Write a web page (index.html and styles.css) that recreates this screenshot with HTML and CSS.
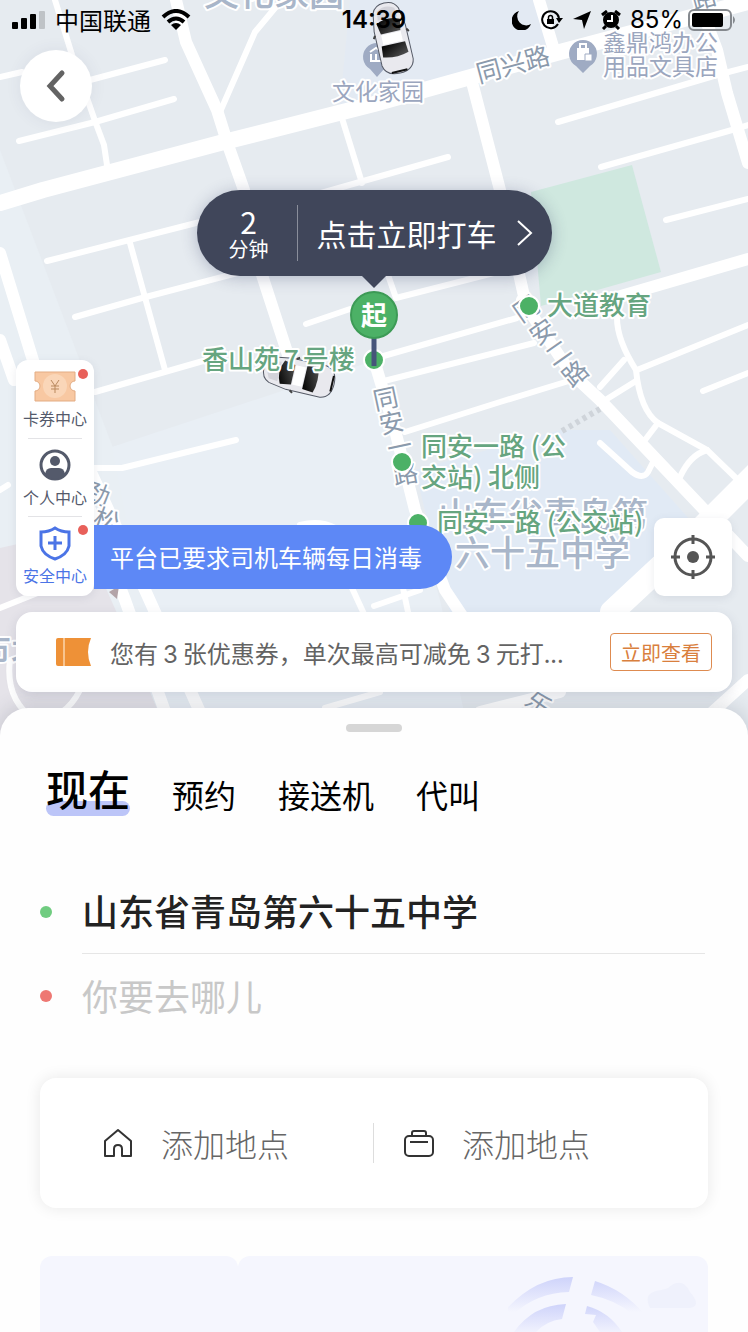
FILE: index.html
```html
<!DOCTYPE html>
<html lang="zh-CN">
<head>
    <meta charset="UTF-8">
    <meta name="viewport" content="width=device-width, initial-scale=1.0">
    <title>打车</title>
    <link rel="stylesheet" href="styles.css">
</head>
<body>
    <section class="map">
        <svg class="map-canvas" viewBox="0 0 748 740" preserveAspectRatio="xMidYMin slice">
            <defs>
                <linearGradient id="glass" x1="0" y1="0" x2="1" y2="1">
                    <stop offset="0" stop-color="#000"/>
                    <stop offset="1" stop-color="#555"/>
                </linearGradient>
                <g id="car">
                    <path d="M-13 -28Q-10 -36 0 -36Q10 -36 13 -28L16 -10V25Q14 36 0 36Q-14 36 -16 25V-10Z" fill="#e9e9ee" stroke="#555a66"/>
                    <path d="M-9 -29Q0 -35 9 -29L10 -20H-10Z" fill="#d3d3da"/>
                    <path d="M-12 -17Q0 -23 12 -17L10 -6H-10Z" fill="url(#glass)"/>
                    <path d="M-10 -5H10V5H-10Z" fill="#fff"/>
                    <path d="M-12 6H12L13 17Q0 21 -13 17Z" fill="url(#glass)"/>
                    <path d="M-8 34H8" stroke="#111" stroke-width="2"/>
                    <path d="M-16 -6L-18 -3M16 -6L18 -3" stroke="#444" stroke-width="2"/>
                </g>
            </defs>
            <rect width="748" height="740" fill="#e6ebf0"/>
            <!-- 地块 -->
            <path d="M350 0H535L552 48L374 97L340 106Z" fill="#e3eaf3"/>
            <path d="M0 150L110 440L190 640V740H0Z" fill="#e9eff4"/>
            <path d="M112 447L370 362L440 600L470 740H170Z" fill="#e9eff5"/>
            <path d="M415 470L560 430L610 430L690 520L600 612H450Z" fill="#e1eaf5"/>
            <path d="M0 548L80 530L120 620L170 740H0Z" fill="#e5e3e9"/>
            <path d="M531 192L632 165L661 272L541 306Z" fill="#cfe8df"/>
            <!-- 道路 -->
            <g class="road road-sm">
                <path d="M55 0L72 55L95 121L104 145L107 165"/>
                <path d="M0 77L22 72M90 80L165 60M19 141L95 122L174 99"/>
                <path d="M275 8L255 32L220 112"/>
                <path d="M341 115L362 183M300 199L374 178L448 157"/>
                <path d="M558 122L717 75L748 67M601 167L732 130L748 125M666 220L748 199"/>
                <path d="M47 261L200 222M75 317L142 298L260 267M130 243L165 370M95 392L210 359"/>
                <path d="M94 468H122L236 440M0 490L8 485"/>
                <path d="M306 324L350 309M388 275L396 298L510 269"/>
                <path d="M380 357L517 318M380 382L534 343M405 432L500 402L572 380"/>
                <path d="M617 318Q617 340 636 370Q640 410 658 423L707 450L738 480"/>
                <path d="M637 370L748 325M703 391L748 373M600 387L624 360M607 399L636 381"/>
                <path d="M658 423L645 440M707 450Q690 455 680 477M600 443L632 472Q643 480 648 472L654 460"/>
                <path d="M352 588L364 614M374 606L420 590M403 588L408 612"/>
                <path d="M0 608L40 592M10 660Q5 700 35 720M35 720Q65 720 80 690"/>
                <path d="M325 708L380 692M300 525Q320 520 335 528"/>
            </g>
            <g class="road road-md">
                <path d="M176 0L186 42L217 110L228 145L244 190L262 275L288 355"/>
                <path d="M472 82L500 190L524 296M539 0L554 50"/>
                <path d="M700 5L717 50L727 93L748 163"/>
                <path d="M590 305L748 259"/>
                <path d="M0 253L36 370L125 600L168 720M0 340L14 380M90 470L145 590L200 712"/>
                <path d="M374 360L395 430L415 510L445 590L465 620"/>
                <path d="M522 300L570 372L600 400L748 556M748 680L706 718M480 712L560 692"/>
            </g>
            <path class="road road-lg" d="M0 203L43 190L220 143L374 104L560 52L748 2"/>
            <path class="road road-xl" d="M760 470L700 530L612 612"/>
            <path d="M562 431L600 409" stroke="#cfd4da" stroke-width="6" stroke-dasharray="4 4"/>
            <!-- 地名 -->
            <g class="label label-area">
                <text x="204" y="6">文化家园</text>
                <text x="438" y="528">山东省青岛第</text>
                <text x="455" y="566">六十五中学</text>
                <text x="-24" y="663">市北</text>
            </g>
            <g class="label label-road">
                <text transform="translate(479 83) rotate(-15)">同兴路</text>
                <text transform="translate(694 10) rotate(-15)">路</text>
                <text transform="translate(385 399) rotate(-12)" x="-12" y="9">同</text>
                <text transform="translate(391 423) rotate(-12)" x="-12" y="9">安</text>
                <text transform="translate(399 447) rotate(-12)" x="-12" y="9">一</text>
                <text transform="translate(405 474) rotate(-10)" x="-12" y="9">路</text>
                <text transform="translate(526 309) rotate(-35)" x="-12" y="9">同</text>
                <text transform="translate(542 332) rotate(-35)" x="-12" y="9">安</text>
                <text transform="translate(558 353) rotate(-35)" x="-12" y="9">二</text>
                <text transform="translate(575 374) rotate(-40)" x="-12" y="9">路</text>
                <text transform="translate(97 494) rotate(20)" x="-12" y="9">劲</text>
                <text transform="translate(106 520) rotate(20)" x="-12" y="9">松</text>
                <text transform="translate(538 704) rotate(35)" x="-12" y="9">乐</text>
            </g>
            <path d="M109 592L119 586L117 599Z" fill="#b3a4a8"/>
            <g fill="#9fabc3">
                <path d="M377 77L370 69A14 14 0 1 1 384 69Z"/>
                <path d="M583 73L576 66A14 14 0 1 1 590 66Z"/>
            </g>
            <path d="M370 52L376 48L382 52M371 54V61H381V54M376 54V61" fill="none" stroke="#fff" stroke-width="2"/>
            <path d="M577 48H589V60H577Z" fill="#fff"/>
            <path d="M580 48V44H586V48" fill="none" stroke="#fff" stroke-width="2"/>
            <path d="M585 54H592V61H585Z" fill="#fff" stroke="#9fabc3"/>
            <g class="label label-shop">
                <text x="332" y="100">文化家园</text>
                <text x="603" y="51">鑫鼎鸿办公</text>
                <text x="603" y="75">用品文具店</text>
            </g>
            <use href="#car" transform="translate(392 38) rotate(-13)"/>
            <use href="#car" transform="translate(299 376) rotate(-77)"/>
            <!-- 推荐上车点 -->
            <g class="stop">
                <circle cx="374" cy="360" r="10"/>
                <circle cx="529" cy="306" r="10"/>
                <circle cx="402" cy="462" r="10"/>
                <circle cx="418" cy="523" r="10"/>
            </g>
            <g class="label label-stop">
                <text x="202" y="369">香山苑<tspan dx="4">7</tspan><tspan dx="4">号楼</tspan></text>
                <text x="547" y="315">大道教育</text>
                <text x="421" y="456">同安一路 (公</text>
                <text x="421" y="487">交站) 北侧</text>
                <text x="437" y="532">同安一路 (公交站)</text>
            </g>
            <path d="M374 338V366" stroke="#46557a" stroke-width="5"/>
            <circle cx="374" cy="315" r="23" fill="#4cb166" stroke="#3d9b56" stroke-width="2"/>
            <text class="pin-text" x="374" y="325">起</text>
        </svg>

        <header class="status-bar">
            <div class="status-left">
                <svg width="33" height="18" viewBox="0 0 33 18">
                    <rect x="0" y="11" width="6" height="7" rx="1"/>
                    <rect x="9" y="7" width="6" height="11" rx="1"/>
                    <rect x="18" y="3" width="6" height="15" rx="1"/>
                    <rect x="27" y="0" width="6" height="18" rx="1" fill="#bfc3c7"/>
                </svg>
                <span>中国联通</span>
                <svg width="30" height="22" viewBox="0 0 30 22" fill="none" stroke="#000" stroke-width="4">
                    <path d="M2 8Q15 -4 28 8"/>
                    <path d="M7 13Q15 6 23 13"/>
                    <path d="M15 21L10 16Q15 12 20 16Z" fill="#000" stroke="none"/>
                </svg>
            </div>
            <time class="status-time">14:39</time>
            <div class="status-right">
                <svg width="20" height="20" viewBox="0 0 20 20"><path d="M7 1A10 10 0 1 0 19 14A9 9 0 0 1 7 1Z"/></svg>
                <svg width="22" height="20" viewBox="0 0 22 20">
                    <path d="M17 14A8.500 8.500 0 1 1 18 8" fill="none" stroke="#000" stroke-width="2"/>
                    <path d="M15 8H22L18 13Z"/>
                    <path d="M6 9H13V14H6Z"/>
                    <path d="M7.500 9V7.500A2 2 0 0 1 11.500 7.500V9" fill="none" stroke="#000" stroke-width="1.500"/>
                </svg>
                <svg width="20" height="20" viewBox="0 0 20 20"><path d="M19 1L12 19L10 10L1 9Z"/></svg>
                <svg width="20" height="20" viewBox="0 0 20 20">
                    <circle cx="10" cy="10" r="8"/>
                    <path d="M1 5L6 1M19 5L14 1M5 16L2 19M15 16L18 19" stroke="#000" stroke-width="3"/>
                    <path d="M11 5V11H6" fill="none" stroke="#fff" stroke-width="2"/>
                </svg>
                <span>85%</span>
                <svg class="battery" width="48" height="22" viewBox="0 0 48 22">
                    <rect x="1" y="1" width="42" height="20" rx="5" fill="none" stroke="#85898e" stroke-width="2"/>
                    <rect x="4" y="4" width="31" height="14" rx="2"/>
                    <path d="M45 7Q49 11 45 15Z" fill="#85898e"/>
                </svg>
            </div>
        </header>

        <button class="back" type="button" aria-label="返回">
            <svg width="24" height="36" viewBox="0 0 24 36"><path d="M18 5L6 18L18 31" fill="none" stroke="#636363" stroke-width="5" stroke-linecap="round"/></svg>
        </button>

        <button class="bubble" type="button">
            <span class="bubble-wait"><b>2</b>分钟</span>
            <span class="bubble-text">点击立即打车</span>
            <svg width="18" height="28" viewBox="0 0 18 28"><path d="M2 2L15 14L2 26" fill="none" stroke="#fff" stroke-width="2"/></svg>
        </button>

        <div class="tools">
            <nav class="side-menu">
                <a class="side-item has-dot" href="#">
                    <svg width="42" height="36" viewBox="0 0 42 36">
                        <path d="M1 4H41V13A5 5 0 0 0 41 23V33H1V23A5 5 0 0 0 1 13Z" fill="#f8c8a2" stroke="#e3ac83"/>
                        <circle cx="21" cy="18" r="12" fill="#fad6b8"/>
                        <path d="M17 12L21 18L25 12M21 18V25M17 18H25M17 21H25" fill="none" stroke="#b9895f" stroke-width="1"/>
                    </svg>
                    卡券中心
                </a>
                <a class="side-item" href="#">
                    <svg width="36" height="36" viewBox="0 0 36 36">
                        <circle cx="18" cy="18" r="14" fill="none" stroke="#545a6b" stroke-width="3"/>
                        <circle cx="18" cy="14" r="5" fill="#545a6b"/>
                        <path d="M8 27Q9 21 14 21H22Q27 21 28 27Q18 36 8 27Z" fill="#545a6b"/>
                    </svg>
                    个人中心
                </a>
                <a class="side-item safe has-dot" href="#">
                    <svg width="36" height="36" viewBox="0 0 36 36" fill="none" stroke="#4b74e6" stroke-width="3">
                        <path d="M18 3Q24 7 32 7V21Q30 30 18 34Q6 30 4 21V7Q12 7 18 3Z"/>
                        <path d="M18 11V25M11 18H25"/>
                    </svg>
                    安全中心
                </a>
            </nav>
            <p class="notice">平台已要求司机车辆每日消毒</p>
            <button class="locate" type="button" aria-label="定位">
                <svg width="46" height="46" viewBox="0 0 46 46" fill="none" stroke="#555" stroke-width="3">
                    <circle cx="23" cy="23" r="18"/>
                    <circle cx="23" cy="23" r="6" fill="#555" stroke="none"/>
                    <path d="M23 1V10M23 36V45M1 23H10M36 23H45"/>
                </svg>
            </button>
        </div>

        <div class="coupon">
            <svg width="36" height="28" viewBox="0 0 36 28">
                <path d="M2 0H35Q29 14 35 28H2Q0 28 0 26V2Q0 0 2 0Z" fill="#ee9137"/>
                <path d="M8 0V28" stroke="#f8c48f" stroke-width="2"/>
            </svg>
            <p>您有<span>3</span>张优惠券，单次最高可减免<span>3</span>元打...</p>
            <button type="button">立即查看</button>
        </div>
    </section>

    <main class="sheet">
        <div class="handle"></div>
        <div class="tabs">
            <button class="tab active" type="button">现在</button>
            <button class="tab" type="button">预约</button>
            <button class="tab" type="button">接送机</button>
            <button class="tab" type="button">代叫</button>
        </div>
        <form class="route">
            <div class="route-row">
                <label class="dot green" for="from" aria-label="起点"></label>
                <input id="from" type="text" value="山东省青岛第六十五中学">
            </div>
            <div class="route-row">
                <label class="dot red" for="to" aria-label="终点"></label>
                <input id="to" type="text" placeholder="你要去哪儿">
            </div>
        </form>
        <div class="places">
            <a href="#">
                <svg width="30" height="30" viewBox="0 0 30 30" fill="none" stroke="#333" stroke-width="2" stroke-linejoin="round">
                    <path d="M2 13L15 2L28 13V28H19V21Q19 17 15 17Q11 17 11 21V28H2Z"/>
                </svg>
                添加地点
            </a>
            <a href="#">
                <svg width="30" height="30" viewBox="0 0 30 30" fill="none" stroke="#333" stroke-width="2">
                    <rect x="1" y="8" width="28" height="20" rx="4"/>
                    <path d="M8 8V5Q8 3 10 3H20Q22 3 22 5V8M6 14H24"/>
                </svg>
                添加地点
            </a>
        </div>
        <div class="promo">
            <div class="promo-side"></div>
            <div class="promo-main">
                <svg width="200" height="76" viewBox="0 0 200 76">
                    <defs>
                        <linearGradient id="fade" gradientUnits="userSpaceOnUse" x1="0" y1="20" x2="0" y2="56">
                            <stop offset="0" stop-color="#cdd2fa"/>
                            <stop offset="1" stop-color="#f5f6fe"/>
                        </linearGradient>
                        <linearGradient id="fade-low" gradientUnits="userSpaceOnUse" x1="0" y1="46" x2="0" y2="80">
                            <stop offset="0" stop-color="#ccd1fa"/>
                            <stop offset="1" stop-color="#f5f6fe"/>
                        </linearGradient>
                    </defs>
                    <path d="M-6 58Q25 21 65 21L61 36Q28 37 6 58Z" fill="url(#fade)"/>
                    <path d="M87 25Q116 34 136 58H124Q108 44 83 39Z" fill="url(#fade)"/>
                    <path d="M6 76Q25 49 58 48L54 63Q38 65 28 76Z" fill="url(#fade-low)"/>
                    <path d="M79 50Q101 56 114 76H92L85 66L88 59L77 58Z" fill="url(#fade-low)"/>
                    <path d="M142 52Q134 36 153 34Q158 33 160 32Q174 20 182 36Q194 50 182 52Z" fill="#eff1fc"/>
                </svg>
            </div>
        </div>
    </main>
</body>
</html>
```

FILE: styles.css
```css
* {
    box-sizing: border-box;
}
body {
    margin: 0;
    background-color: #fff;
    color: #000;
    font-family: "Noto Sans CJK SC", sans-serif;
}
button,
input {
    padding: 0;
    border: 0;
    background: none;
    color: inherit;
    font-family: inherit;
}
button {
    cursor: pointer;
}
a {
    color: inherit;
    text-decoration: none;
}
p {
    margin: 0;
}
svg {
    flex: none;
}

/* 地图 */
.map {
    position: relative;
    padding-bottom: 16px;
}
/* 地图底图铺在所有控件下面，并延伸到面板圆角后面 */
.map-canvas {
    position: absolute;
    top: 0;
    left: 0;
    z-index: -1;
    width: 100%;
    height: calc(100% + 32px);
}
.road {
    fill: none;
    stroke: #fff;
    stroke-linecap: round;
    stroke-linejoin: round;
}
.road-sm {
    stroke-width: 6px;
}
.road-md {
    stroke-width: 12px;
}
.road-lg {
    stroke-width: 16px;
}
.road-xl {
    stroke-width: 24px;
}
.label {
    stroke: #fff;
    stroke-width: 4px;
    stroke-linejoin: round;
    paint-order: stroke;
}
.label-area {
    fill: #a9b6c9;
    font-size: 35px;
    font-weight: 500;
}
.label-road {
    fill: #8b9aac;
    font-size: 25px;
}
.label-shop {
    fill: #9ba6be;
    font-size: 23px;
}
.label-stop {
    fill: #66a580;
    font-size: 26px;
    font-weight: 500;
}
.stop {
    fill: #4cb166;
    stroke: #fff;
    stroke-width: 2px;
}
.pin-text {
    fill: #fff;
    font-size: 26px;
    font-weight: 700;
    text-anchor: middle;
}

/* 状态栏 */
.status-bar {
    display: grid;
    grid-template-columns: 1fr auto 1fr;
    align-items: center;
    height: 40px;
    padding: 0 12px;
    font-size: 24px;
    line-height: 40px;
}
.status-left,
.status-right {
    display: flex;
    align-items: center;
    gap: 10px;
}
.status-right {
    justify-content: flex-end;
    gap: 9px;
    font-family: Inter, sans-serif;
}
.battery {
    margin-left: -4px;
}
.status-time {
    font-family: Inter, sans-serif;
    font-weight: 600;
}

.back {
    display: flex;
    align-items: center;
    justify-content: center;
    width: 72px;
    height: 72px;
    margin: 10px 0 0 20px;
    border-radius: 50%;
    background-color: #fff;
    box-shadow: 0 0 16px rgba(60, 70, 100, .08);
}

/* 上车气泡 */
.bubble {
    position: relative;
    display: flex;
    align-items: center;
    height: 86px;
    margin: 68px auto 0;
    padding: 0 18px 0 32px;
    border-radius: 43px;
    background-color: #40465a;
    color: #fff;
    box-shadow: 0 2px 16px rgba(50, 60, 100, .3);
}
.bubble::after {
    content: "";
    position: absolute;
    top: 100%;
    left: 50%;
    margin-left: -12px;
    border: 12px solid transparent;
    border-top-color: #40465a;
    border-bottom: 0;
}
.bubble-wait {
    display: flex;
    flex-direction: column;
    padding-right: 28px;
    border-right: 1px solid #8a8e9b;
    font-size: 20px;
    line-height: 24px;
}
.bubble-wait b {
    font-size: 30px;
    font-weight: 400;
    line-height: 32px;
}
.bubble-text {
    margin: 0 19px;
    font-size: 30px;
    line-height: 40px;
}

/* 侧边菜单、公告和定位 */
.tools {
    display: flex;
    align-items: flex-end;
    margin: 84px 16px 0;
}
.side-menu {
    width: 78px;
    padding-bottom: 2px;
    border-radius: 12px;
    background-color: #fff;
    box-shadow: 0 2px 8px rgba(60, 70, 100, .1);
}
.side-item {
    position: relative;
    display: flex;
    flex-direction: column;
    align-items: center;
    gap: 2px;
    padding: 8px 0;
    color: #545a6b;
    font-size: 16px;
    line-height: 24px;
}
.side-item + .side-item {
    padding-top: 9px;
    padding-bottom: 7px;
}
.side-item + .side-item::before {
    content: "";
    position: absolute;
    top: 0;
    left: 12px;
    right: 12px;
    border-top: 1px solid #e3e3e6;
}
.side-item.safe {
    color: #4b74e6;
}
.has-dot::after {
    content: "";
    position: absolute;
    top: 9px;
    right: 6px;
    width: 10px;
    height: 10px;
    border-radius: 50%;
    background-color: #e8605a;
}
.notice {
    margin-bottom: 7px;
    padding: 0 30px 0 16px;
    border-radius: 0 32px 32px 0;
    background-color: #5d88f6;
    color: #fff;
    font-size: 24px;
    line-height: 64px;
}
.locate {
    display: flex;
    align-items: center;
    justify-content: center;
    width: 78px;
    height: 78px;
    margin-left: auto;
    border-radius: 10px;
    background-color: #fff;
    box-shadow: 0 2px 8px rgba(60, 70, 100, .1);
}

.coupon {
    display: flex;
    align-items: center;
    height: 80px;
    margin: 16px 16px 0;
    padding: 0 20px 0 40px;
    border-radius: 16px;
    background-color: #fff;
    box-shadow: 0 4px 12px rgba(60, 70, 100, .15);
}
.coupon p {
    flex: 1;
    margin-left: 18px;
    color: #636363;
    font-size: 24px;
    white-space: nowrap;
}
.coupon span {
    margin: 0 5px;
    font-family: Inter, sans-serif;
}
.coupon button {
    height: 38px;
    padding: 0 10px;
    border: 1px solid #de8b50;
    border-radius: 4px;
    color: #d97f3e;
    font-size: 20px;
}

/* 底部面板 */
.sheet {
    position: relative;
    padding: 16px 40px 0;
    border-radius: 28px 28px 0 0;
    background-color: #fefefe;
    box-shadow: 0 -2px 20px rgba(60, 70, 90, .2);
}
.handle {
    width: 56px;
    height: 8px;
    margin: 0 auto;
    border-radius: 4px;
    background-color: #d6d6d6;
}
.tabs {
    display: flex;
    align-items: flex-end;
    gap: 42px;
    margin-top: 34px;
    padding-left: 6px;
}
.tab {
    padding-bottom: 2px;
    font-size: 32px;
    line-height: 40px;
}
.tab.active {
    position: relative;
    z-index: 0;
    padding-bottom: 6px;
    font-size: 42px;
    font-weight: 500;
    line-height: 44px;
}
.tab.active::before {
    content: "";
    position: absolute;
    right: 0;
    bottom: 0;
    left: 0;
    z-index: -1;
    height: 15px;
    border-radius: 8px;
    background-color: #bcc5f8;
}
.route {
    margin-top: 54px;
}
.route-row {
    display: flex;
    align-items: center;
    gap: 30px;
}
.route-row input {
    flex: 1;
    min-width: 0;
    height: 84px;
    margin-right: 3px;
    padding-bottom: 3px;
    color: #222;
    font-size: 36px;
    font-weight: 500;
    outline: 0;
}
.route-row input::placeholder {
    color: #c8c8c8;
    font-weight: 400;
}
.route-row:first-child input {
    border-bottom: 1px solid #e6e6e6;
}
.dot {
    width: 12px;
    height: 12px;
    border-radius: 50%;
}
.green {
    background-color: #70cc80;
}
.red {
    background-color: #ee7873;
}
.places {
    display: grid;
    grid-template-columns: 1fr 1fr;
    margin-top: 40px;
    padding: 45px 0;
    border-radius: 16px;
    background-color: #fff;
    box-shadow: 0 0 16px rgba(0, 0, 0, .09);
}
.places a {
    display: flex;
    align-items: center;
    gap: 28px;
    padding-left: 30px;
    color: #666;
    font-size: 32px;
    font-weight: 300;
    line-height: 40px;
}
.places a:first-child {
    padding-left: 63px;
    border-right: 1px solid #ddd;
}
.promo {
    display: flex;
    height: 76px;
    margin-top: 48px;
}
.promo-side,
.promo-main {
    border-radius: 12px 12px 0 0;
    background-color: #f5f6fe;
}
.promo-side {
    width: 198px;
}
.promo-main {
    display: flex;
    flex: 1;
    justify-content: flex-end;
}
```
